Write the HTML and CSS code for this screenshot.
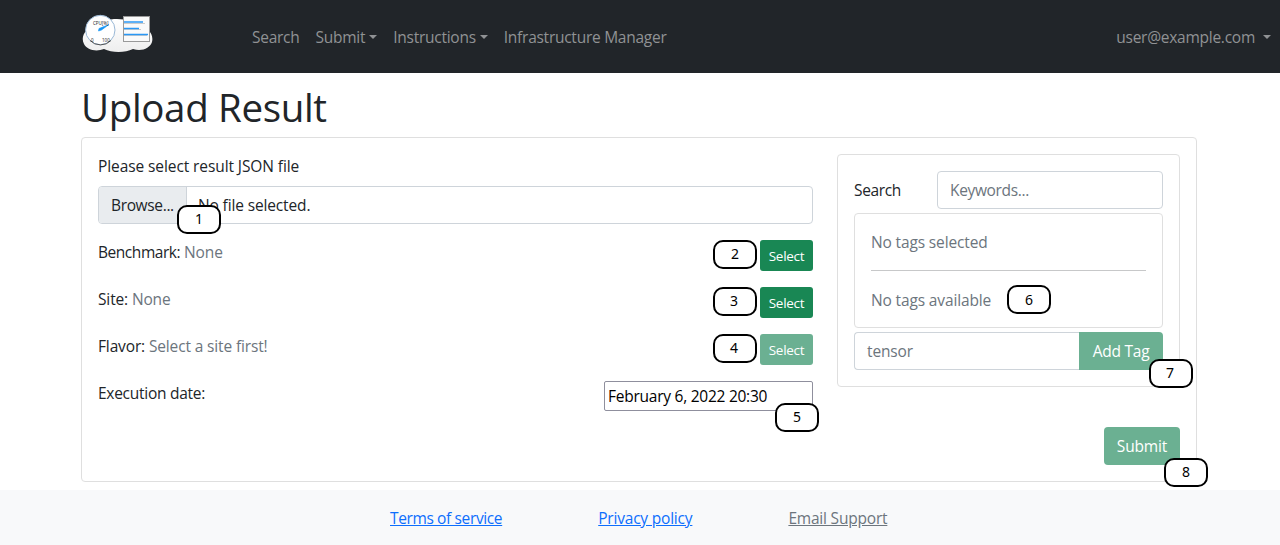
FILE: index.html
```html
<!DOCTYPE html>
<html lang="en">
<head>
<meta charset="utf-8">
<title>Upload Result</title>
<link rel="stylesheet" href="styles.css">
</head>
<body>
<header class="navbar">
  <a class="brand">
    <svg class="logo" width="74" height="44" viewBox="0 0 74 44">
      <defs><linearGradient id="cloud" x1="0" y1="0" x2="0" y2="1"><stop offset="0" stop-color="#fff"/><stop offset="1" stop-color="#eee"/></linearGradient></defs>
      <path d="M15 13C5 15-1 23 3 31c3 6 12 8 20 5 8 4 21 4 29 0 9 3 17-1 19-7 2-8-4-15-13-15C50 4 25 3 15 13z" fill="url(#cloud)"/>
      <rect x="42.500" y="3.500" width="26" height="25" fill="#fafafa" stroke="#999"/>
      <path d="M43 10.500h21M43 16.500h17M43 22.500h23" stroke="#ccc"/>
      <path d="M43 9h19M43 15.500h15M43 21.500h24" stroke="#2a98f5" stroke-width="1.600"/>
      <circle cx="19.300" cy="17" r="14.700" fill="#fff" stroke="#9ab8d6"/>
      <path d="M9 27.500A14.700 14.700 0 0 0 30 27.500" fill="none" stroke="#555"/>
      <path d="M18 15.500l10-4-7.500 5.500-3 1z" fill="#1595f5" stroke="#1595f5" stroke-width=".6"/>
      <text class="dial-title" x="12" y="12">CPU[%]</text>
      <text class="dial-title" x="10" y="29">0</text>
      <text class="dial-title" x="21" y="29">100</text>
    </svg>
  </a>
  <nav class="nav-links">
    <a>Search</a>
    <a class="dropdown">Submit</a>
    <a class="dropdown">Instructions</a>
    <a>Infrastructure Manager</a>
  </nav>
  <a class="dropdown user">user@example.com </a>
</header>
<main class="container">
  <h1>Upload Result</h1>
  <section class="card upload">
    <div class="columns">
      <form class="form">
        <div class="file-label">Please select result JSON file</div>
        <div class="file-input">
          <span class="browse">Browse...</span><span class="file-name">No file selected.</span>
          <span class="marker m1">1</span>
        </div>
        <div class="row"><div><span class="benchmark">Benchmark:</span> <span class="muted">None</span></div><span class="btn small">Select</span><span class="marker m-row">2</span></div>
        <div class="row"><div>Site: <span class="muted">None</span></div><span class="btn small">Select</span><span class="marker m-row third">3</span></div>
        <div class="row"><div>Flavor: <span class="muted">Select a site first!</span></div><span class="btn small disabled">Select</span><span class="marker m-row third">4</span></div>
        <div class="row"><div class="exec">Execution date:</div><span class="date">February 6, 2022 20:30</span><span class="marker m5">5</span></div>
      </form>
      <aside class="card tags">
        <div class="search"><span class="search-label">Search</span><span class="input keywords">Keywords...</span></div>
        <div class="card tag-list">
          <div>No tags selected</div>
          <div class="rule"></div>
          <div>No tags available</div>
          <span class="marker m6">6</span>
        </div>
        <div class="add"><span class="input">tensor</span><span class="btn disabled">Add Tag</span><span class="marker m7">7</span></div>
      </aside>
    </div>
    <div class="actions"><span class="btn disabled">Submit</span><span class="marker m8">8</span></div>
  </section>
</main>
<footer class="footer">
  <a class="terms">Terms of service</a>
  <a>Privacy policy</a>
  <a class="support">Email Support</a>
</footer>
</body>
</html>
```
FILE: styles.css
```css
* { box-sizing: border-box; }
body {
  margin: 0;
  height: 545px;
  display: flex;
  flex-direction: column;
  overflow: hidden;
  background: #fff;
  color: #212529;
  font: 15.5px/24px "Open Sans", "Noto Sans", sans-serif;
  letter-spacing: -.14px;
}
.navbar {
  height: 73px;
  flex: none;
  display: flex;
  align-items: center;
  padding: 0 9px 0 81px;
  background: #212529;
  color: #909294;
  letter-spacing: -.26px;
}
.brand { width: 171px; height: 47px; }
.logo { display: block; }
.dial-title { font: 4.5px "Open Sans", sans-serif; letter-spacing: 0; fill: #111; }
.nav-links { display: flex; gap: 16px; flex: 1; padding-top: 1px; }
.dropdown { display: flex; align-items: center; }
.dropdown::after {
  content: "";
  margin-left: 4px;
  border: 4.8px solid transparent;
  border-top-color: currentColor;
  border-bottom: 0;
}
.user { padding-top: 1px; }
.user::after { margin-left: 8px; }
.container { width: 1116px; margin-left: 81px; height: 417px; flex: none; }
h1 { margin: 0; padding-top: 10px; height: 64px; font-weight: 400; font-size: 38.5px; line-height: 48px; letter-spacing: -.35px; }
.card { border: 1px solid #dfdfdf; border-radius: 4px; }
.upload { height: 345px; padding: 16px; }
.columns { display: flex; gap: 24px; height: 273px; align-items: flex-start; }
.form { width: 715px; }
.file-label { height: 32px; letter-spacing: -.09px; }
.file-input {
  position: relative;
  display: flex;
  align-items: center;
  height: 38px;
  margin-bottom: 16px;
  border: 1px solid #ced4da;
  border-radius: 4px;
}
.browse { width: 88px; height: 36px; padding: 6px 12px; background: #e9ecef; border-right: 1px solid #ced4da; border-radius: 3px 0 0 3px; letter-spacing: -.35px; }
.file-name { padding-left: 11px; }
.row { position: relative; display: flex; justify-content: space-between; height: 31px; margin-bottom: 16px; }
.benchmark { letter-spacing: -.45px; }
.exec { letter-spacing: -.27px; }
.muted { color: #6c757d; }
.btn { height: 38px; padding: 7px 0; text-align: center; border-radius: 4px; background: #198754; color: #fff; }
.small { width: 53px; height: 31px; padding: 6px 0; line-height: 21px; font-size: 13.5px; letter-spacing: -.3px; border-radius: 3px; }
.disabled { background: #6bb092; }
.date { width: 209px; height: 30px; padding: 2px 3px; border: 1px solid #8f8f9d; border-radius: 2px; color: #000; letter-spacing: -.25px; }
.tags { width: 343px; height: 233px; padding: 16px; }
.search { display: flex; justify-content: space-between; line-height: 38px; margin-bottom: 4px; }
.search-label { letter-spacing: -.35px; }
.input { width: 226px; height: 38px; padding: 0 12px; line-height: 37px; border: 1px solid #ced4da; border-radius: 4px; color: #6c757d; }
.keywords { letter-spacing: -.35px; }
.tag-list { position: relative; height: 115px; padding: 16px 16px; color: #6c757d; margin-bottom: 4px; }
.rule { height: 1px; margin: 16px 0 17px; background: #c7c8c9; }
.add { position: relative; display: flex; }
.add .input { width: 225px; border-radius: 4px 0 0 4px; border-right: 0; }
.add .btn { flex: 1; border-radius: 0 4px 4px 0; letter-spacing: -.25px; }
.actions { position: relative; display: flex; justify-content: flex-end; }
.actions .btn { width: 76px; }
.marker {
  position: absolute;
  width: 44px;
  height: 29px;
  border: 2px solid #000;
  border-radius: 10px;
  background: #fff;
  color: #000;
  text-align: center;
  font: 14px/24px "Noto Sans", sans-serif;
  letter-spacing: 0;
}
.m1 { left: 78px; top: 18px; }
.m-row { right: 56px; top: 0; }
.third { padding-right: 2px; }
.m5 { right: -6px; top: 22px; }
.m6 { left: 152px; top: 71px; line-height: 26px; }
.m7 { right: -30px; top: 27px; padding-right: 2px; line-height: 23px; }
.m8 { right: -28px; top: 31px; }
.footer {
  flex: 1;
  display: flex;
  gap: 96px;
  padding: 16px 0 0 390px;
  background: #f8f9fa;
}
.footer a { color: #0d6efd; text-decoration: underline; letter-spacing: -.2px; }
.footer .terms { letter-spacing: -.37px; }
.footer .support { color: #6c757d; }
```
